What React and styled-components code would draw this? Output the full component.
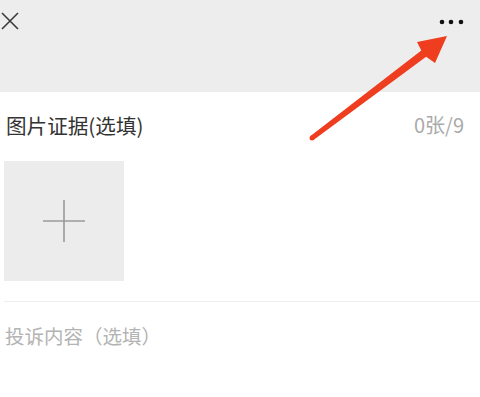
import React from "react";
import styled, { createGlobalStyle } from "styled-components";

const Global = createGlobalStyle`
  html, body { margin: 0; padding: 0; background: #ffffff; }
  body { font-family: "Noto Sans CJK SC", "Noto Sans", sans-serif; }
`;

const Page = styled.div`
  position: relative;
  width: 480px;
  height: 397px;
  overflow: hidden;
  background: #ffffff;
`;

const Header = styled.header`
  height: 92px;
  background: #ededed;
  display: flex;
  justify-content: space-between;
  align-items: flex-start;
`;

const IconButton = styled.div`
  display: flex;
  align-items: center;
  justify-content: center;
  width: ${(p) => p.$w}px;
  height: ${(p) => p.$h}px;
  margin: ${(p) => p.$m};
`;

const Section = styled.section`
  padding: 0 0 0 4px;
`;

const TitleRow = styled.div`
  display: flex;
  justify-content: space-between;
  align-items: center;
  height: 28px;
  margin-top: 19px;
  padding: 0 16px 0 2px;
`;

const Title = styled.span`
  font-size: 20.6px;
  color: #333333;
  line-height: 28px;
`;

const Count = styled.span`
  font-size: 20px;
  color: #aaaaaa;
  line-height: 28px;
`;

const UploadBox = styled.div`
  width: 120px;
  height: 120px;
  margin-top: 22px;
  background: #ececec;
  display: flex;
  align-items: center;
  justify-content: center;
`;

const Divider = styled.div`
  height: 1px;
  background: #eeeeee;
  margin-top: 20px;
`;

const Placeholder = styled.div`
  font-size: 19.5px;
  line-height: 28px;
  color: #b3b3b3;
  margin-top: 20px;
  padding-left: 1px;
`;

const ArrowLayer = styled.svg`
  position: absolute;
  left: 0;
  top: 0;
  pointer-events: none;
`;

export default function App() {
  return (
    <Page>
      <Global />
      <Header>
        <IconButton $w={20} $h={20} $m="11px 0 0 0">
          <svg width="20" height="20" viewBox="0 0 20 20">
            <path d="M2 2 L18 18 M18 2 L2 18" stroke="#3a3a3a" strokeWidth="1.6" fill="none" />
          </svg>
        </IconButton>
        <IconButton $w={26} $h={8} $m="18px 16px 0 0">
          <svg width="26" height="8" viewBox="0 0 26 8">
            <circle cx="4" cy="4" r="2.3" fill="#111" />
            <circle cx="13" cy="4" r="2.3" fill="#111" />
            <circle cx="23" cy="4" r="2.3" fill="#111" />
          </svg>
        </IconButton>
      </Header>
      <Section>
        <TitleRow>
          <Title>图片证据(选填)</Title>
          <Count>0张/9</Count>
        </TitleRow>
        <UploadBox>
          <svg width="42" height="42" viewBox="0 0 42 42">
            <path d="M0 21 H42 M21 0 V42" stroke="#9a9a9a" strokeWidth="1.6" fill="none" />
          </svg>
        </UploadBox>
        <Divider />
        <Placeholder>投诉内容（选填）</Placeholder>
      </Section>
      <ArrowLayer width="480" height="397" viewBox="0 0 480 397">
        <polygon
          points="310.5,136 421.3,50.4 417,42 447,36 435,63 426.1,56.8 313.5,140"
          fill="#ef3d1f"
          strokeLinejoin="round"
        />
        <circle cx="312" cy="138" r="2.5" fill="#ef3d1f" />
      </ArrowLayer>
    </Page>
  );
}
